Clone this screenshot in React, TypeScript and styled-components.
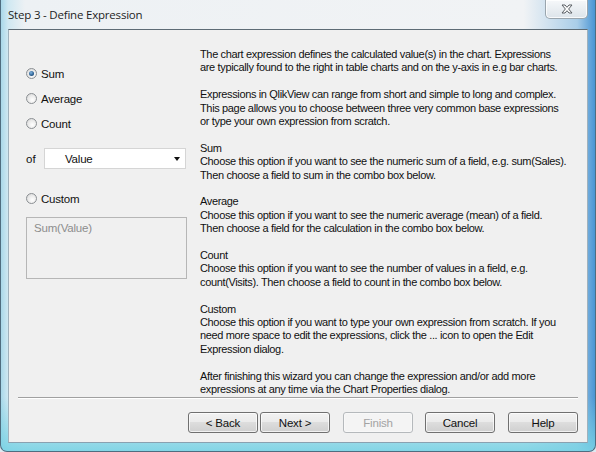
import styled, { createGlobalStyle } from "styled-components";

const Global = createGlobalStyle`
  html, body {
    margin: 0;
    padding: 0;
    background: #dfe9f0;
  }
  * {
    box-sizing: border-box;
  }
`;

const Window = styled.div`
  width: 596px;
  height: 452px;
  display: flex;
  flex-direction: column;
  padding: 0 7px 8px 7px;
  border: 1px solid #4f6d80;
  border-top: none;
  border-radius: 0 0 7px 7px;
  background:
    linear-gradient(180deg, rgba(255, 255, 255, 0) 88%, rgba(120, 210, 228, 0.9) 100%),
    linear-gradient(90deg, #a9d8ea 0, #cfe8f2 7px, #edf1f4 24px, #f1f3f5 88%, #a9cde8 97%, #4a95d4 100%);
  overflow: hidden;
`;

const TitleBar = styled.div`
  height: 29px;
  flex-shrink: 0;
  display: flex;
  align-items: flex-start;
  justify-content: space-between;
`;

const Title = styled.div`
  margin-top: 7px;
  font-family: "Open Sans", "Noto Sans", sans-serif;
  font-size: 11.5px;
  color: #1e1e1e;
  letter-spacing: -0.2px;
`;

const CloseButton = styled.div`
  width: 43px;
  height: 19px;
  margin-right: 0;
  display: flex;
  align-items: center;
  justify-content: center;
  border: 1px solid #9aa5ad;
  border-top: none;
  border-radius: 0 0 5px 5px;
  background: linear-gradient(180deg, #f6f8fa 0%, #e8edf1 55%, #dde4ea 100%);
  box-shadow: inset 0 0 0 1px rgba(255, 255, 255, 0.8);
`;

const Client = styled.div`
  flex: 1;
  display: flex;
  flex-direction: column;
  background: #f0f0f0;
  border-top: 1px solid #5d6b75;
  border-left: 1px solid #9fb1bc;
  border-right: 1px solid #9fb1bc;
  border-bottom: 1px solid #8aa1b0;
  font-family: "Liberation Sans", Arial, sans-serif;
  font-size: 11px;
  color: #111;
`;

const Body = styled.div`
  flex: 1;
  display: flex;
  padding-top: 18px;
`;

const Options = styled.div`
  width: 191px;
  flex-shrink: 0;
  display: flex;
  flex-direction: column;
  padding: 13px 0 0 17px;
`;

const RadioRow = styled.label<{ $gap?: number }>`
  height: 25px;
  display: flex;
  align-items: center;
  gap: 4px;
  margin-top: ${(p) => p.$gap ?? 0}px;
  font-size: 11.5px;
  letter-spacing: -0.2px;
`;

const Radio = styled.span<{ $checked?: boolean }>`
  width: 11px;
  height: 11px;
  border-radius: 50%;
  border: 1px solid #8b8f93;
  background: radial-gradient(circle at 60% 65%, #ffffff 0%, #e9e9e9 55%, #cfcfcf 100%);
  display: flex;
  align-items: center;
  justify-content: center;
  &::after {
    content: "";
    display: ${(p) => (p.$checked ? "block" : "none")};
    width: 5px;
    height: 5px;
    border-radius: 50%;
    background: radial-gradient(circle at 40% 35%, #7fb4e0 0%, #2a5d8f 60%, #173a5c 100%);
  }
`;

const FieldRow = styled.div`
  display: flex;
  align-items: center;
  margin-top: 12px;
`;

const OfLabel = styled.span`
  width: 18px;
  font-size: 11.5px;
`;

const Combo = styled.div`
  width: 142px;
  height: 21px;
  display: flex;
  align-items: center;
  justify-content: space-between;
  padding: 0 5px 0 20px;
  background: #fff;
  border: 1px solid #d5d5d5;
  font-size: 11.5px;
  letter-spacing: -0.2px;
`;

const Arrow = styled.span`
  width: 0;
  height: 0;
  border-left: 3.5px solid transparent;
  border-right: 3.5px solid transparent;
  border-top: 4px solid #111;
`;

const ExpressionBox = styled.div`
  width: 161px;
  height: 62px;
  margin-top: 6px;
  padding: 4px 7px;
  border: 1px solid #b6b6b6;
  background: #f0f0f0;
  color: #8d8d8d;
  font-size: 11.5px;
  letter-spacing: -0.2px;
`;

const Description = styled.div`
  display: flex;
  flex-direction: column;
  gap: 13.4px;
`;

const Paragraph = styled.div`
  line-height: 13.4px;
  white-space: nowrap;
  letter-spacing: -0.35px;
`;

const Separator = styled.div`
  margin: 0 9px;
  height: 2px;
  border-top: 1px solid #a0a0a0;
  border-bottom: 1px solid #ffffff;
`;

const Footer = styled.div`
  display: flex;
  justify-content: flex-end;
  padding: 13px 9px 9px;
`;

const Button = styled.div<{ $gap?: number; $disabled?: boolean }>`
  width: 70px;
  height: 21px;
  margin-left: ${(p) => p.$gap ?? 0}px;
  display: flex;
  align-items: center;
  justify-content: center;
  border: 1px solid ${(p) => (p.$disabled ? "#b5b9bc" : "#707070")};
  border-radius: 3px;
  background: ${(p) =>
    p.$disabled
      ? "#f4f4f4"
      : "linear-gradient(180deg, #f2f2f2 0%, #ebebeb 45%, #dddddd 50%, #cfcfcf 100%)"};
  box-shadow: inset 0 0 0 1px ${(p) => (p.$disabled ? "#f8f8f8" : "rgba(255, 255, 255, 0.7)")};
  color: ${(p) => (p.$disabled ? "#a3a3a3" : "#111")};
  font-size: 11.5px;
  letter-spacing: -0.2px;
`;

const paragraphs: string[][] = [
  [
    "The chart expression defines the calculated value(s) in the chart. Expressions",
    "are typically found to the right in table charts and on the y-axis in e.g bar charts.",
  ],
  [
    "Expressions in QlikView can range from short and simple to long and complex.",
    "This page allows you to choose between three very common base expressions",
    "or type your own expression from scratch.",
  ],
  [
    "Sum",
    "Choose this option if you want to see the numeric sum of a field, e.g. sum(Sales).",
    "Then choose a field to sum in the combo box below.",
  ],
  [
    "Average",
    "Choose this option if you want to see the numeric average (mean) of a field.",
    "Then choose a field for the calculation in the combo box below.",
  ],
  [
    "Count",
    "Choose this option if you want to see the number of values in a field, e.g.",
    "count(Visits). Then choose a field to count in the combo box below.",
  ],
  [
    "Custom",
    "Choose this option if you want to type your own expression from scratch. If you",
    "need more space to edit the expressions, click the ... icon to open the Edit",
    "Expression dialog.",
  ],
  [
    "After finishing this wizard you can change the expression and/or add more",
    "expressions at any time via the Chart Properties dialog.",
  ],
];

const CloseGlyph = () => (
  <svg width="12" height="10" viewBox="0 0 12 10">
    <path
      d="M1 1 H4 L6 3.3 L8 1 H11 L7.6 5 L11 9 H8 L6 6.7 L4 9 H1 L4.4 5 Z"
      fill="#ffffff"
      stroke="#5a5f64"
      strokeWidth="1"
      strokeLinejoin="round"
    />
  </svg>
);

const App = () => {
  return (
    <>
      <Global />
      <Window>
        <TitleBar>
          <Title>Step 3 - Define Expression</Title>
          <CloseButton>
            <CloseGlyph />
          </CloseButton>
        </TitleBar>
        <Client>
          <Body>
            <Options>
              <RadioRow>
                <Radio $checked />
                Sum
              </RadioRow>
              <RadioRow>
                <Radio />
                Average
              </RadioRow>
              <RadioRow>
                <Radio />
                Count
              </RadioRow>
              <FieldRow>
                <OfLabel>of</OfLabel>
                <Combo>
                  Value
                  <Arrow />
                </Combo>
              </FieldRow>
              <RadioRow $gap={17}>
                <Radio />
                Custom
              </RadioRow>
              <ExpressionBox>Sum(Value)</ExpressionBox>
            </Options>
            <Description>
              {paragraphs.map((lines, i) => (
                <Paragraph key={i}>
                  {lines.map((line, j) => (
                    <div key={j}>{line}</div>
                  ))}
                </Paragraph>
              ))}
            </Description>
          </Body>
          <Separator />
          <Footer>
            <Button>&lt; Back</Button>
            <Button $gap={2}>Next &gt;</Button>
            <Button $gap={13} $disabled>
              Finish
            </Button>
            <Button $gap={12}>Cancel</Button>
            <Button $gap={13}>Help</Button>
          </Footer>
        </Client>
      </Window>
    </>
  );
};

export default App;
